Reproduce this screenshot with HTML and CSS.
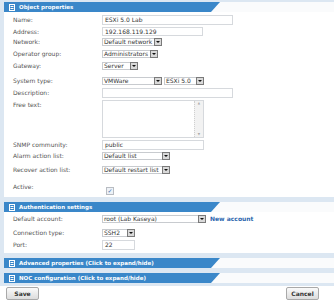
FILE: index.html
```html
<!DOCTYPE html>
<html lang="en">

<head>
    <meta charset="UTF-8">
    <title>Edit device</title>
    <link rel="stylesheet" href="styles.css">
</head>

<body>
    <div class="form">
        <div class="panel">
            <div class="panel-head">
                <div class="tab">
                    <svg class="tab-icon" viewBox="0 0 6 7" width="6" height="7"><rect x="0.5" y="0.5" width="5" height="6" fill="none" stroke="#fff"/><path d="M1.5 2.5h3M1.5 4.5h3" stroke="#fff"/></svg>
                    Object properties
                </div>
            </div>
            <div class="panel-body body-object">
                <div class="row h12"><span class="label lh10">Name:</span><span class="input w131">ESXi 5.0 Lab</span></div>
                <div class="row h11"><span class="label lh9">Address:</span><span class="input w101 h9">192.168.119.129</span></div>
                <div class="row h12"><span class="label lh8">Network:</span><span class="select w60"><span class="sel-text">Default network</span><span class="sel-btn"></span></span></div>
                <div class="row h12"><span class="label lh8">Operator group:</span><span class="select w56"><span class="sel-text">Administrators</span><span class="sel-btn"></span></span></div>
                <div class="row h15"><span class="label lh8">Gateway:</span><span class="select w36"><span class="sel-text">Server</span><span class="sel-btn"></span></span></div>
                <div class="row h11"><span class="label lh8">System type:</span>
                    <span class="pair">
                        <span class="select w60"><span class="sel-text">VMWare</span><span class="sel-btn"></span></span>
                        <span class="select w40"><span class="sel-text">ESXi 5.0</span><span class="sel-btn"></span></span>
                    </span>
                </div>
                <div class="row h12"><span class="label lh10">Description:</span><span class="input w131"></span></div>
                <div class="row h40"><span class="label lh10">Free text:</span><span class="textarea"><span class="scroll"><span class="arr">&#9650;</span><span class="arr">&#9660;</span></span></span></div>
                <div class="row h12"><span class="label lh10">SNMP community:</span><span class="input w102">public</span></div>
                <div class="row h14"><span class="label lh8">Alarm action list:</span><span class="select w68"><span class="sel-text">Default list</span><span class="sel-btn"></span></span></div>
                <div class="row h18"><span class="label lh8">Recover action list:</span><span class="select w68"><span class="sel-text">Default restart list</span><span class="sel-btn"></span></span></div>
                <div class="row h13"><span class="label lh6">Active:</span><span class="check">&#10003;</span></div>
            </div>
        </div>

        <div class="panel">
            <div class="panel-head">
                <div class="tab">
                    <svg class="tab-icon" viewBox="0 0 6 7" width="6" height="7"><rect x="0.5" y="0.5" width="5" height="6" fill="none" stroke="#fff"/><path d="M1.5 2.5h3M1.5 4.5h3" stroke="#fff"/></svg>
                    Authentication settings
                </div>
            </div>
            <div class="panel-body body-auth">
                <div class="row h14"><span class="label lh8">Default account:</span>
                    <span class="pair">
                        <span class="select w104"><span class="sel-text">root (Lab Kaseya)</span><span class="sel-btn"></span></span>
                        <a class="link" href="#">New account</a>
                    </span>
                </div>
                <div class="row h11"><span class="label lh8">Connection type:</span><span class="select w33"><span class="sel-text">SSH2</span><span class="sel-btn"></span></span></div>
                <div class="row h10"><span class="label lh10">Port:</span><span class="input w33">22</span></div>
            </div>
        </div>

        <div class="panel">
            <div class="panel-head">
                <div class="tab">
                    <svg class="tab-icon" viewBox="0 0 6 7" width="6" height="7"><rect x="0.5" y="0.5" width="5" height="6" fill="none" stroke="#fff"/><path d="M1.5 2.5h3M1.5 4.5h3" stroke="#fff"/></svg>
                    Advanced properties (Click to expand/hide)
                </div>
            </div>
        </div>

        <div class="panel">
            <div class="panel-head">
                <div class="tab">
                    <svg class="tab-icon" viewBox="0 0 6 7" width="6" height="7"><rect x="0.5" y="0.5" width="5" height="6" fill="none" stroke="#fff"/><path d="M1.5 2.5h3M1.5 4.5h3" stroke="#fff"/></svg>
                    NOC configuration (Click to expand/hide)
                </div>
            </div>
        </div>

        <div class="actions">
            <button class="btn">Save</button>
            <button class="btn">Cancel</button>
        </div>
    </div>
</body>

</html>
```

FILE: styles.css
```css
body {
    margin: 0;
    background: #fff;
    font-family: 'DejaVu Sans', Verdana, sans-serif;
    font-size: 6px;
    color: #444;
}

.form {
    width: 334px;
}

.panel {
    border-left: 4px solid #dce7f2;
    border-bottom: 3px solid #dce7f2;
}

.panel-head {
    border-top: 2px solid #dce7f2;
    background: #fafbfc;
    height: 10px;
}

.tab {
    width: 216px;
    height: 100%;
    background: #3a87c9;
    clip-path: polygon(0 0, 100% 0, calc(100% - 9px) 100%, 0 100%);
    color: #fff;
    font-weight: bold;
    font-size: 5.5px;
    display: flex;
    align-items: center;
    gap: 4px;
    padding-left: 5px;
    box-sizing: border-box;
}

.tab-icon {
    flex: none;
}

.panel-body {
    padding-left: 9px;
    background: #fff;
}

.body-object {
    padding-top: 3px;
}

.body-auth {
    padding-top: 3px;
    padding-bottom: 3px;
}

.row {
    display: grid;
    grid-template-columns: 89px 1fr;
    align-items: start;
}

.h10 { height: 10px; }
.h11 { height: 11px; }
.h12 { height: 12px; }
.h13 { height: 13px; }
.h14 { height: 14px; }
.h15 { height: 15px; }
.h18 { height: 18px; }
.h40 { height: 40px; }

.label {
    color: #555;
    white-space: nowrap;
}

.lh6 { line-height: 6px; }
.lh8 { line-height: 8px; }
.lh9 { line-height: 9px; }
.lh10 { line-height: 10px; }

.input {
    display: block;
    height: 10px;
    box-sizing: border-box;
    border: 1px solid #d6d9dd;
    line-height: 8px;
    padding-left: 2px;
    color: #333;
}

.input.h9 { height: 9px; line-height: 7px; }

.w33 { width: 33px; }
.w36 { width: 36px; }
.w40 { width: 40px; }
.w56 { width: 56px; }
.w60 { width: 60px; }
.w68 { width: 68px; }
.w101 { width: 101px; }
.w102 { width: 102px; }
.w104 { width: 104px; }
.w131 { width: 131px; }

.pair {
    display: flex;
    align-items: start;
    gap: 2px;
}

.select {
    display: flex;
    height: 8px;
    box-sizing: border-box;
    border: 1px solid #c8cbcf;
    border-right: 0;
    background: #fff;
    color: #333;
}

.sel-text {
    flex: 1;
    overflow: hidden;
    white-space: nowrap;
    line-height: 6px;
    padding-left: 1px;
}

.sel-btn {
    width: 8px;
    height: 8px;
    margin-top: -1px;
    flex: none;
    background: #d9d9d9;
    border: 1px solid #7a7a7a;
    box-sizing: border-box;
    position: relative;
}

.sel-btn::after {
    content: "";
    position: absolute;
    left: 1px;
    top: 2px;
    border-left: 2px solid transparent;
    border-right: 2px solid transparent;
    border-top: 2px solid #111;
}

.textarea {
    display: flex;
    justify-content: flex-end;
    width: 102px;
    height: 38px;
    box-sizing: border-box;
    border: 1px solid #d6d9dd;
}

.scroll {
    width: 8px;
    background: #f2f2f2;
    border-left: 1px dotted #d0d0d0;
    display: flex;
    flex-direction: column;
    justify-content: space-between;
    align-items: center;
    color: #aaa;
}

.arr {
    font-size: 3px;
    line-height: 5px;
}

.check {
    display: block;
    margin: 3px 0 0 4px;
    width: 8px;
    height: 8px;
    box-sizing: border-box;
    border: 1px solid #b8bcc2;
    background: #eef2f7;
    color: #3a6fb0;
    font-size: 6px;
    line-height: 6px;
    text-align: center;
}

.link {
    color: #2c66ad;
    font-weight: bold;
    text-decoration: none;
    line-height: 8px;
    margin-left: 2px;
}

.actions {
    display: flex;
    justify-content: space-between;
    padding: 1px 15px 0 6px;
}

.btn {
    width: 33px;
    height: 13px;
    padding: 0;
    font-family: 'DejaVu Sans', Verdana, sans-serif;
    font-size: 6px;
    font-weight: bold;
    color: #333;
    border: 1px solid #a9a9a9;
    border-radius: 2px;
    background: linear-gradient(#fafafa, #dcdcdc);
}
```
